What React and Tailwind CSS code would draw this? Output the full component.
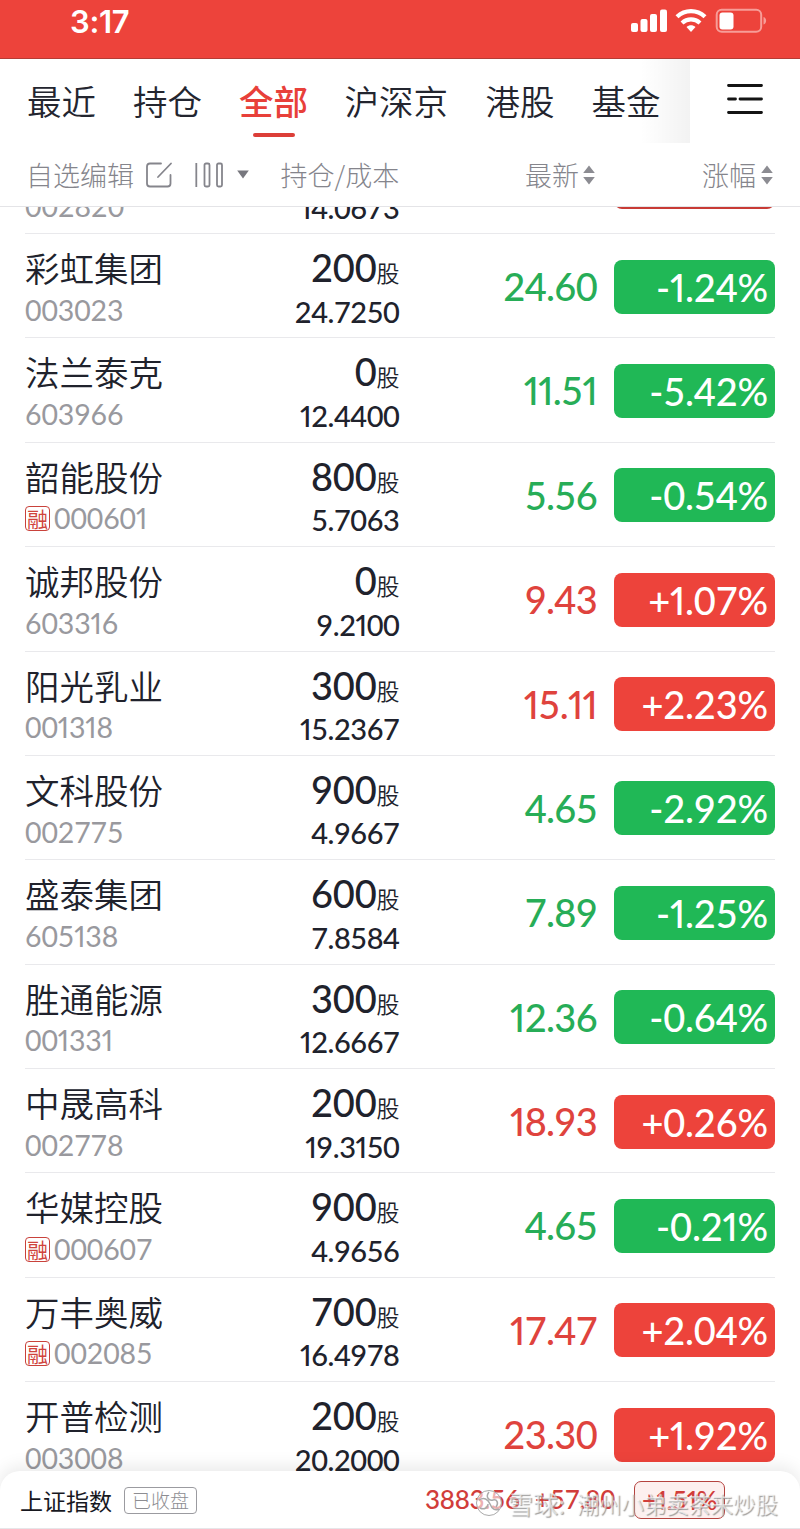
const NUM = "font-['Lato','Noto_Sans_CJK_SC',sans-serif] tabular-nums";

const rows = [
  { name: "彩虹集团", code: "003023", shares: "200", cost: "24.7250", price: "24.60", pct: "-1.24%" },
  { name: "法兰泰克", code: "603966", shares: "0", cost: "12.4400", price: "11.51", pct: "-5.42%" },
  { name: "韶能股份", code: "000601", margin: true, shares: "800", cost: "5.7063", price: "5.56", pct: "-0.54%" },
  { name: "诚邦股份", code: "603316", shares: "0", cost: "9.2100", price: "9.43", pct: "+1.07%" },
  { name: "阳光乳业", code: "001318", shares: "300", cost: "15.2367", price: "15.11", pct: "+2.23%" },
  { name: "文科股份", code: "002775", shares: "900", cost: "4.9667", price: "4.65", pct: "-2.92%" },
  { name: "盛泰集团", code: "605138", shares: "600", cost: "7.8584", price: "7.89", pct: "-1.25%" },
  { name: "胜通能源", code: "001331", shares: "300", cost: "12.6667", price: "12.36", pct: "-0.64%" },
  { name: "中晟高科", code: "002778", shares: "200", cost: "19.3150", price: "18.93", pct: "+0.26%" },
  { name: "华媒控股", code: "000607", margin: true, shares: "900", cost: "4.9656", price: "4.65", pct: "-0.21%" },
  { name: "万丰奥威", code: "002085", margin: true, shares: "700", cost: "16.4978", price: "17.47", pct: "+2.04%" },
  { name: "开普检测", code: "003008", shares: "200", cost: "20.2000", price: "23.30", pct: "+1.92%" },
];

// Even-width figures, with only the "1" set to its own narrow width.
function Figures({ value }) {
  return value.split(/(1+)/).filter(Boolean).map((part, i) =>
    part[0] === "1" ? <span key={i} className="proportional-nums">{part}</span> : part
  );
}

function StatusBar() {
  return (
    <header className="flex h-[59px] shrink-0 items-start justify-between border-b border-[#b53c35] bg-[#ed433b] pl-[70px] pr-[31px] text-white">
      <span className="mt-[6px] font-['Inter',sans-serif] text-[31px] font-semibold leading-[32px] tracking-[-0.3px]">3:17</span>
      <div className="mt-[8px] flex items-start">
        <svg width="38" height="26" viewBox="0 0 38 26" fill="currentColor">
          <rect x="1" y="15" width="7" height="9" rx="2" />
          <rect x="10.500" y="11" width="7" height="13" rx="2" />
          <rect x="20" y="6" width="7" height="18" rx="2" />
          <rect x="30" y="1.500" width="7" height="22.500" rx="2" />
        </svg>
        <svg className="ml-[7px]" width="32" height="26" viewBox="0 0 32 26" fill="none" stroke="currentColor" strokeWidth="4.300">
          <path d="M2 8.800C10 1.300 22 1.300 30 8.800" />
          <path d="M7 15C12.300 10.200 19.700 10.200 25 15" />
          <path d="M11.500 19C14 16.700 18 16.700 20.500 19L16 24Z" fill="currentColor" stroke="none" />
        </svg>
        <svg className="ml-[8px]" width="54" height="26" viewBox="0 0 54 26">
          <rect x="1.700" y="1.700" width="44.500" height="22" rx="5" fill="none" stroke="#f79d98" strokeWidth="2" />
          <rect x="4.500" y="4.500" width="14" height="17" rx="3" fill="#fff" />
          <path d="M48.500 9C52 10 52 15.500 48.500 16.500Z" fill="#f79d98" />
        </svg>
      </div>
    </header>
  );
}

function Tabs() {
  return (
    <nav className="relative flex h-[84px] shrink-0 items-start pl-[27px] pt-[20px] text-[34.5px] font-[350] leading-[42px] text-[#23252f]">
      <span className="w-[106px]">最近</span>
      <span className="w-[106px]">持仓</span>
      <span className="flex w-[105.500px] flex-col items-start font-medium text-[#e8403a]">
        全部
        <span className="ml-[14px] mt-[12px] h-[4px] w-[42px] rounded-full bg-[#dc3e38]" />
      </span>
      <span className="w-[141px]">沪深京</span>
      <span className="w-[106px]">港股</span>
      <span className="w-[70px]">基金</span>
      <div className="absolute left-[640px] top-0 h-[84px] w-[50px] bg-linear-to-r from-black/0 to-black/5" />
      <svg className="ml-[64px] mt-[2px]" width="38" height="36" viewBox="0 0 38 36" stroke="#141414" strokeWidth="2.800" strokeLinecap="round">
        <path d="M2.500 4.500H35.500M2.500 18H9.500M14 18H35.500M2.500 31.500H35.500" />
      </svg>
    </nav>
  );
}

function SortArrows() {
  return (
    <svg width="12" height="20" viewBox="0 0 12 20" fill="#8c8c92">
      <path d="M6 .5L11.800 8H.2ZM6 19.500L11.800 12H.2Z" />
    </svg>
  );
}

function ColumnHeader() {
  return (
    <div className="flex h-[64px] shrink-0 items-start border-b border-[#e4e4e7] pl-[26px] pr-[27px] pt-[14px] text-[27px] font-light leading-[36px] text-[#85858c]">
      <span className="w-[109px]">自选编辑</span>
      <svg className="ml-[10px] mt-[4px]" width="29" height="28" viewBox="0 0 29 28" fill="none" stroke="currentColor" strokeWidth="1.800" strokeLinecap="round">
        <path d="M16 2.500H5Q2 2.500 2 5.500V22.500Q2 25.500 5 25.500H22.500Q25.500 25.500 25.500 22.500V14M13 16L26 2.500" />
      </svg>
      <svg className="ml-[19px] mt-[4px]" width="30" height="28" viewBox="0 0 30 28" fill="none" stroke="currentColor" strokeWidth="1.800">
        <path d="M3.300 2V26" />
        <rect x="11.500" y="2.500" width="5" height="23" rx="1.500" />
        <rect x="24" y="2.500" width="5" height="23" rx="1.500" />
      </svg>
      <svg className="ml-[14px] mt-[13px]" width="12" height="9" viewBox="0 0 12 9" fill="#77777e">
        <path d="M.2.500H11.800L6 8.500Z" />
      </svg>
      <span className="ml-[31.500px] w-[118.500px] whitespace-nowrap">持仓/成本</span>
      <span className="ml-auto flex items-center gap-[4px]">最新<SortArrows /></span>
      <span className="ml-[107px] flex items-center gap-[5px]">涨幅<SortArrows /></span>
    </div>
  );
}

function StockRow({ stock }) {
  const up = stock.pct[0] === "+";
  return (
    <li className="flex h-[104.380px] shrink-0 border-t border-[#e9e9ec]">
      <div className="flex w-[190px] flex-col">
        <span className="mt-[10px] text-[34.500px] font-[350] leading-[46px] text-[#20222c]">{stock.name}</span>
        <div className="mt-[2px] flex h-[36px] items-center">
          {stock.margin && (
            <span className="mr-[4px] flex size-[25px] items-center justify-center rounded-[4px] border border-[#c9423b] text-[21px] leading-none text-[#d0433c]">融</span>
          )}
          <span className={`${NUM} text-[28.500px] tracking-[-0.005em] text-[#99999e]`}><Figures value={stock.code} /></span>
        </div>
      </div>
      <div className="flex w-[184.500px] flex-col items-end text-[#20222c]">
        <div className="mt-[10px] flex h-[47px] items-baseline leading-[46px]">
          <span className={`${NUM} text-[38px] font-medium tracking-[-0.005em]`}><Figures value={stock.shares} /></span>
          <span className="text-[23px] font-[350]">股</span>
        </div>
        <span className={`${NUM} mt-[2.500px] text-[29px] font-medium leading-[36px] tracking-[-0.015em]`}><Figures value={stock.cost} /></span>
      </div>
      <span className={`${NUM} mt-[29px] flex-1 text-right text-[38px] font-medium leading-[46px] tracking-[-0.018em] ${up ? "text-[#df433d]" : "text-[#27ad57]"}`}><Figures value={stock.price} /></span>
      <span className={`${NUM} ml-[17px] mt-[25.500px] h-[54px] w-[161px] rounded-[8px] pr-[7px] text-right text-[38px] font-medium leading-[54px] tracking-[-0.005em] text-white ${up ? "bg-[#ed433b]" : "bg-[#20b856]"}`}><Figures value={stock.pct} /></span>
    </li>
  );
}

function IndexBar() {
  return (
    <footer className="relative flex h-[58px] shrink-0 items-start rounded-t-[20px] border-b border-[#e6e6e9] bg-white pl-[20px] pt-[10px] shadow-[0_-4px_18px_rgba(0,0,0,0.09)]">
      <span className="mt-[1px] text-[23px] leading-[36px] text-[#17181f]">上证指数</span>
      <span className="ml-[12px] mt-[6px] flex h-[27px] w-[73px] items-center justify-center rounded-[4px] border border-[#9b9ba0] text-[19px] font-light text-[#8d8d92]">已收盘</span>
      <span className={`${NUM} ml-[228px] w-[110px] text-[26px] font-medium leading-[36px] tracking-[-0.01em] text-[#d13d3a]`}><Figures value="3883.56" /></span>
      <span className={`${NUM} w-[99px] text-[26px] font-medium leading-[36px] tracking-[-0.01em] text-[#d13d3a]`}><Figures value="+57.80" /></span>
      <span className={`${NUM} h-[38px] w-[91px] rounded-[7px] border border-[#b5433f] bg-[#fdf0ef] text-center text-[26px] font-medium leading-[36px] tracking-[-0.02em] text-[#d13d3a]`}><Figures value="+1.51%" /></span>
      <div className="absolute left-[475px] top-[15px] flex items-center leading-[34px] text-white/60 [text-shadow:1px_1px_1px_#9c9c9c]">
        <svg className="mr-[5px]" width="28" height="28" viewBox="0 0 28 28" fill="none">
          <circle cx="14" cy="14" r="12.500" fill="#fff" fillOpacity=".6" stroke="#aaa" />
          <path d="M4 11C9 8 13 10 15 15S20 22 24 20M14 3C10 8 14 12 18 11S24 14 21 18M5 19C9 21 13 19 13 15" stroke="#aaa" strokeWidth="1.500" />
        </svg>
        <span className="w-[69px] whitespace-nowrap text-[25px]">雪球:</span>
        <span className="whitespace-nowrap text-[22.300px]">潮州小弟卖茶来炒股</span>
      </div>
    </footer>
  );
}

export default function App() {
  return (
    <div className="flex h-[1529px] w-[800px] flex-col overflow-hidden bg-white font-['Noto_Sans_CJK_SC',sans-serif]">
      <StatusBar />
      <Tabs />
      <ColumnHeader />
      <main className="flex h-[1264px] shrink-0 flex-col overflow-hidden px-[25px]">
        <div className={`${NUM} flex h-[26px] shrink-0 overflow-hidden text-[28.500px] leading-[36px]`}>
          <span className="-mt-[19px] w-[190px] text-[#99999e]">002820</span>
          <span className="-mt-[17px] w-[184.500px] text-right text-[29px] font-medium tracking-[-0.015em] text-[#20222c]"><Figures value="14.0673" /></span>
          <span className="-mt-[52px] ml-auto h-[54px] w-[161px] rounded-[8px] bg-[#c83b35]" />
        </div>
        <ul className="flex flex-col">
          {rows.map((stock) => <StockRow key={stock.code} stock={stock} />)}
        </ul>
      </main>
      <IndexBar />
    </div>
  );
}
